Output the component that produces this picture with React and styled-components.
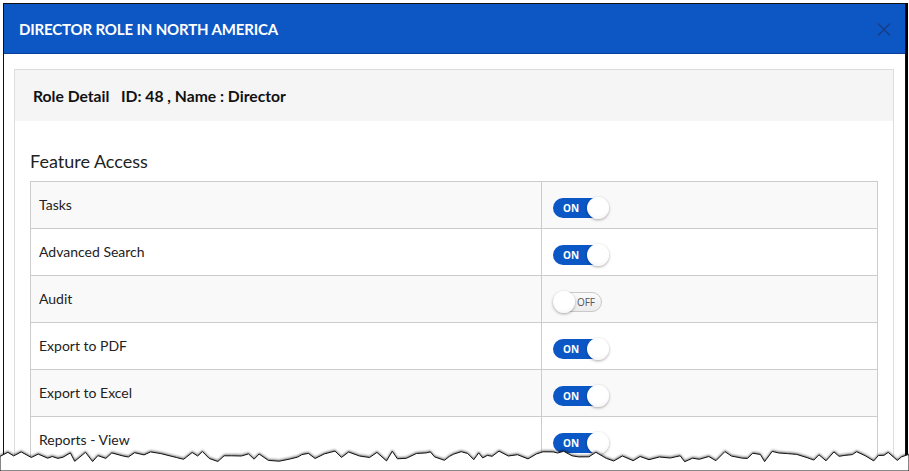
import React from "react";
import styled, { createGlobalStyle } from "styled-components";

const Global = createGlobalStyle`
  html, body { margin: 0; padding: 0; background: #fff; }
  body { font-family: Lato, "Open Sans", Arial, sans-serif; color: #222; overflow: hidden; height: 471px; }
`;

const Page = styled.div`
  position: relative;
  height: 471px;
  overflow: hidden;
  padding: 3px 3px 0 3px;
  box-sizing: border-box;
`;

const Modal = styled.div`
  border: 1px solid #111;
  border-bottom: none;
  box-shadow: 2px 0 0 #000;
  background: #fff;
  height: 520px;
`;

const Header = styled.div`
  height: 49px;
  background: #0c57c4;
  border-bottom: 1px solid #0a3f98;
  display: flex;
  align-items: center;
  justify-content: space-between;
  padding: 0 14px 0 15px;
`;

const Title = styled.h1`
  margin: 0;
  color: #fff;
  font-size: 15px;
  font-weight: 700;
  letter-spacing: -0.15px;
  text-transform: uppercase;
`;

const Close = styled.button`
  border: 0;
  background: none;
  padding: 0;
  width: 14px;
  height: 13px;
  display: flex;
  margin-top: 2px;
  cursor: pointer;
`;

const Body = styled.div`
  padding: 15px 11px 0 10px;
`;

const Panel = styled.div`
  border: 1px solid #ddd;
  background: #fff;
`;

const PanelHeading = styled.div`
  height: 51px;
  background: #f5f5f5;
  display: flex;
  align-items: center;
  padding: 0 18px;
  font-size: 15.7px;
  font-weight: 700;
  color: #111;
  white-space: pre;
`;

const PanelBody = styled.div`
  padding: 29px 15px 0 15px;
`;

const SectionTitle = styled.h2`
  margin: 0 0 9px 0;
  font-size: 18px;
  font-weight: 400;
  color: #222;
  line-height: 22px;
`;

const Table = styled.div`
  border: 1px solid #ccc;
  border-bottom: none;
`;

const Row = styled.div`
  display: grid;
  grid-template-columns: 510px 1fr;
  height: 46px;
  border-bottom: 1px solid #ccc;
  background: ${(p) => (p.$striped ? "#f9f9f9" : "#fff")};
`;

const Cell = styled.div`
  display: flex;
  align-items: center;
  padding: 0 8px;
  font-size: 14px;
  color: #222;
  & + & {
    border-left: 1px solid #ccc;
    padding-left: 11px;
    padding-top: 5px;
  }
`;

const Label = styled.span`
  margin-top: -1px;
`;

const Switch = styled.div`
  position: relative;
  width: ${(p) => (p.$on ? "54px" : "49px")};
  height: 20px;
  border-radius: 10px;
  box-sizing: border-box;
  background: ${(p) => (p.$on ? "#0b57c5" : "linear-gradient(#fbfbfb, #ececec)")};
  border: ${(p) => (p.$on ? "none" : "1px solid #c9c9c9")};
  display: flex;
  align-items: center;
  justify-content: ${(p) => (p.$on ? "flex-start" : "flex-end")};
  padding: ${(p) => (p.$on ? "0 0 0 10px" : "0 6px 0 0")};
`;

const SwitchText = styled.span`
  font-family: "Open Sans", Arial, sans-serif;
  font-size: 10px;
  font-weight: ${(p) => (p.$on ? 700 : 400)};
  color: ${(p) => (p.$on ? "#fff" : "#555")};
  line-height: 1;
`;

const Knob = styled.span`
  position: absolute;
  top: -1px;
  ${(p) => (p.$on ? "right: -2px;" : "left: -1px; top: -2px;")}
  width: 22px;
  height: 22px;
  border-radius: 50%;
  background: radial-gradient(circle at 50% 35%, #fff 55%, #eee 100%);
  box-shadow: 0 1px 3px rgba(0, 0, 0, 0.35);
`;

const TornEdge = styled.svg`
  position: absolute;
  left: 0;
  bottom: 0;
  width: 909px;
  height: 30px;
  display: block;
`;

const features = [
  ["Tasks", true],
  ["Advanced Search", true],
  ["Audit", false],
  ["Export to PDF", true],
  ["Export to Excel", true],
  ["Reports - View", true],
];

function tornPoints() {
  let seed = 7;
  const rnd = () => {
    seed = (seed * 9301 + 49297) % 233280;
    return seed / 233280;
  };
  const pts = [];
  let x = 0;
  while (x <= 909) {
    const y = 10 + rnd() * 11;
    pts.push(`${x.toFixed(1)},${y.toFixed(1)}`);
    x += 4 + rnd() * 7;
  }
  pts.push("909,14");
  return pts;
}

const pts = tornPoints();

export default function App() {
  return (
    <>
      <Global />
      <Page>
        <Modal>
          <Header>
            <Title>Director Role in North America</Title>
            <Close aria-label="Close">
              <svg width="14" height="13" viewBox="0 0 14 13">
                <path d="M1 0.5 L13 12.5 M13 0.5 L1 12.5" stroke="#1a3a80" strokeWidth="1.1" fill="none" />
              </svg>
            </Close>
          </Header>
          <Body>
            <Panel>
              <PanelHeading>{"Role Detail   ID: 48 , Name : Director"}</PanelHeading>
              <PanelBody>
                <SectionTitle>Feature Access</SectionTitle>
                <Table>
                  {features.map(([name, on], i) => (
                    <Row key={name} $striped={i % 2 === 0}>
                      <Cell>
                        <Label>{name}</Label>
                      </Cell>
                      <Cell>
                        <Switch $on={on}>
                          <SwitchText $on={on}>{on ? "ON" : "OFF"}</SwitchText>
                          <Knob $on={on} />
                        </Switch>
                      </Cell>
                    </Row>
                  ))}
                </Table>
              </PanelBody>
            </Panel>
          </Body>
        </Modal>
        <TornEdge viewBox="0 0 909 30" preserveAspectRatio="none">
          <defs>
            <filter id="sh" x="-1%" y="-50%" width="102%" height="200%">
              <feDropShadow dx="0" dy="-1" stdDeviation="0.8" floodColor="#000" floodOpacity="0.5" />
            </filter>
          </defs>
          <polygon
            points={`${pts.join(" ")} 909,30 0,30`}
            fill="#fff"
            stroke="#111"
            strokeWidth="1"
            filter="url(#sh)"
          />
        </TornEdge>
      </Page>
    </>
  );
}
